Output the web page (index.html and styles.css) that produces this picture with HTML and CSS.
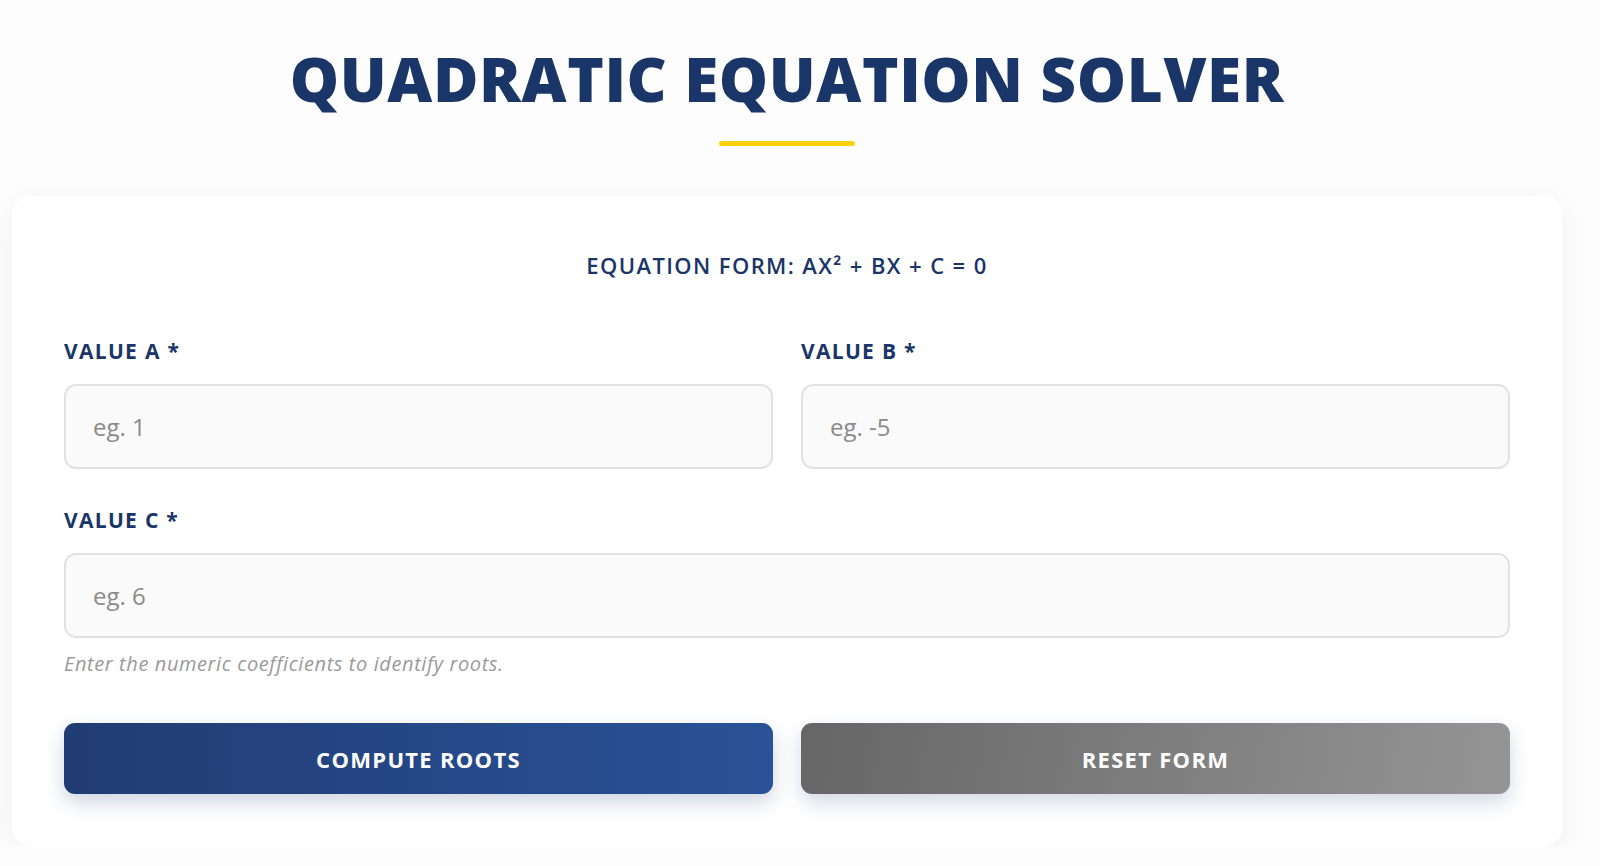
FILE: index.html
```html
<!DOCTYPE html>
<html lang="en">
<head>
  <meta charset="UTF-8">
  <title>Quadratic Equation Solver</title>
  <link rel="stylesheet" href="styles.css">
</head>
<body>
  <div class="page">
    <header class="header">
      <h1>Quadratic Equation Solver</h1>
      <div class="underline"></div>
    </header>

    <form class="card" id="solver">
      <p class="form-note">Equation form: ax² + bx + c = 0</p>

      <div class="fields">
        <div class="field">
          <label for="a">Value A *</label>
          <input type="text" id="a" placeholder="eg. 1">
        </div>
        <div class="field">
          <label for="b">Value B *</label>
          <input type="text" id="b" placeholder="eg. -5">
        </div>
        <div class="field wide">
          <label for="c">Value C *</label>
          <input type="text" id="c" placeholder="eg. 6">
          <small class="hint">Enter the numeric coefficients to identify roots.</small>
        </div>
      </div>

      <div class="actions">
        <button type="button" class="btn btn-primary">Compute Roots</button>
        <button type="reset" class="btn btn-secondary">Reset Form</button>
      </div>
    </form>
  </div>
</body>
</html>
```

FILE: styles.css
```css
body {
  margin: 0;
  background-color: #fdfdfd;
  font-family: "Open Sans", Arial, sans-serif;
  color: #1a3568;
}
.page {
  width: 1550px;
  margin-left: 12px;
}
.header {
  display: flex;
  flex-direction: column;
  align-items: center;
  padding-top: 38px;
}
h1 {
  margin: 0;
  font-size: 62px;
  font-weight: 800;
  line-height: 80px;
  letter-spacing: 0.6px;
  text-transform: uppercase;
  color: #1a3568;
}
.underline {
  width: 136px;
  height: 5px;
  margin-top: 23px;
  border-radius: 3px;
  background-color: #ffd10a;
}
.card {
  margin-top: 50px;
  padding: 52px 52px 52px;
  background-color: #ffffff;
  border-radius: 18px;
  box-shadow: 0 8px 36px rgba(0, 0, 0, 0.055);
}
.form-note {
  margin: 0 0 56px;
  text-align: center;
  font-size: 22px;
  font-weight: 600;
  letter-spacing: 1.4px;
  text-transform: uppercase;
  line-height: 34px;
}
.fields {
  display: grid;
  grid-template-columns: 1fr 1fr;
  column-gap: 28px;
  row-gap: 38px;
}
.field {
  display: flex;
  flex-direction: column;
}
.field.wide {
  grid-column: span 2;
}
label {
  font-size: 21px;
  font-weight: 700;
  letter-spacing: 1.3px;
  text-transform: uppercase;
  line-height: 26px;
  margin-bottom: 20px;
}
input {
  height: 85px;
  box-sizing: border-box;
  padding: 0 27px;
  border: 2px solid #e2e2e2;
  border-radius: 12px;
  background-color: #fafafa;
  font-family: "Open Sans", Arial, sans-serif;
  font-size: 24px;
  color: #333;
}
input::placeholder {
  color: #8a8a8a;
}
.hint {
  margin-top: 13px;
  font-size: 20px;
  font-style: italic;
  letter-spacing: 0.6px;
  color: #9a9a9a;
  line-height: 26px;
}
.actions {
  display: grid;
  grid-template-columns: 1fr 1fr;
  gap: 28px;
  margin-top: 46px;
}
.btn {
  height: 71px;
  border: none;
  border-radius: 11px;
  font-family: "Open Sans", Arial, sans-serif;
  font-size: 22px;
  font-weight: 700;
  letter-spacing: 1.3px;
  text-transform: uppercase;
  color: #ffffff;
  cursor: pointer;
}
.btn-primary {
  background: linear-gradient(90deg, #213c73, #2a5298);
  box-shadow: 0 8px 20px rgba(30, 60, 114, 0.22);
}
.btn-secondary {
  background: linear-gradient(100deg, #666666, #959595);
  box-shadow: 0 8px 20px rgba(40, 60, 120, 0.2);
}
```
